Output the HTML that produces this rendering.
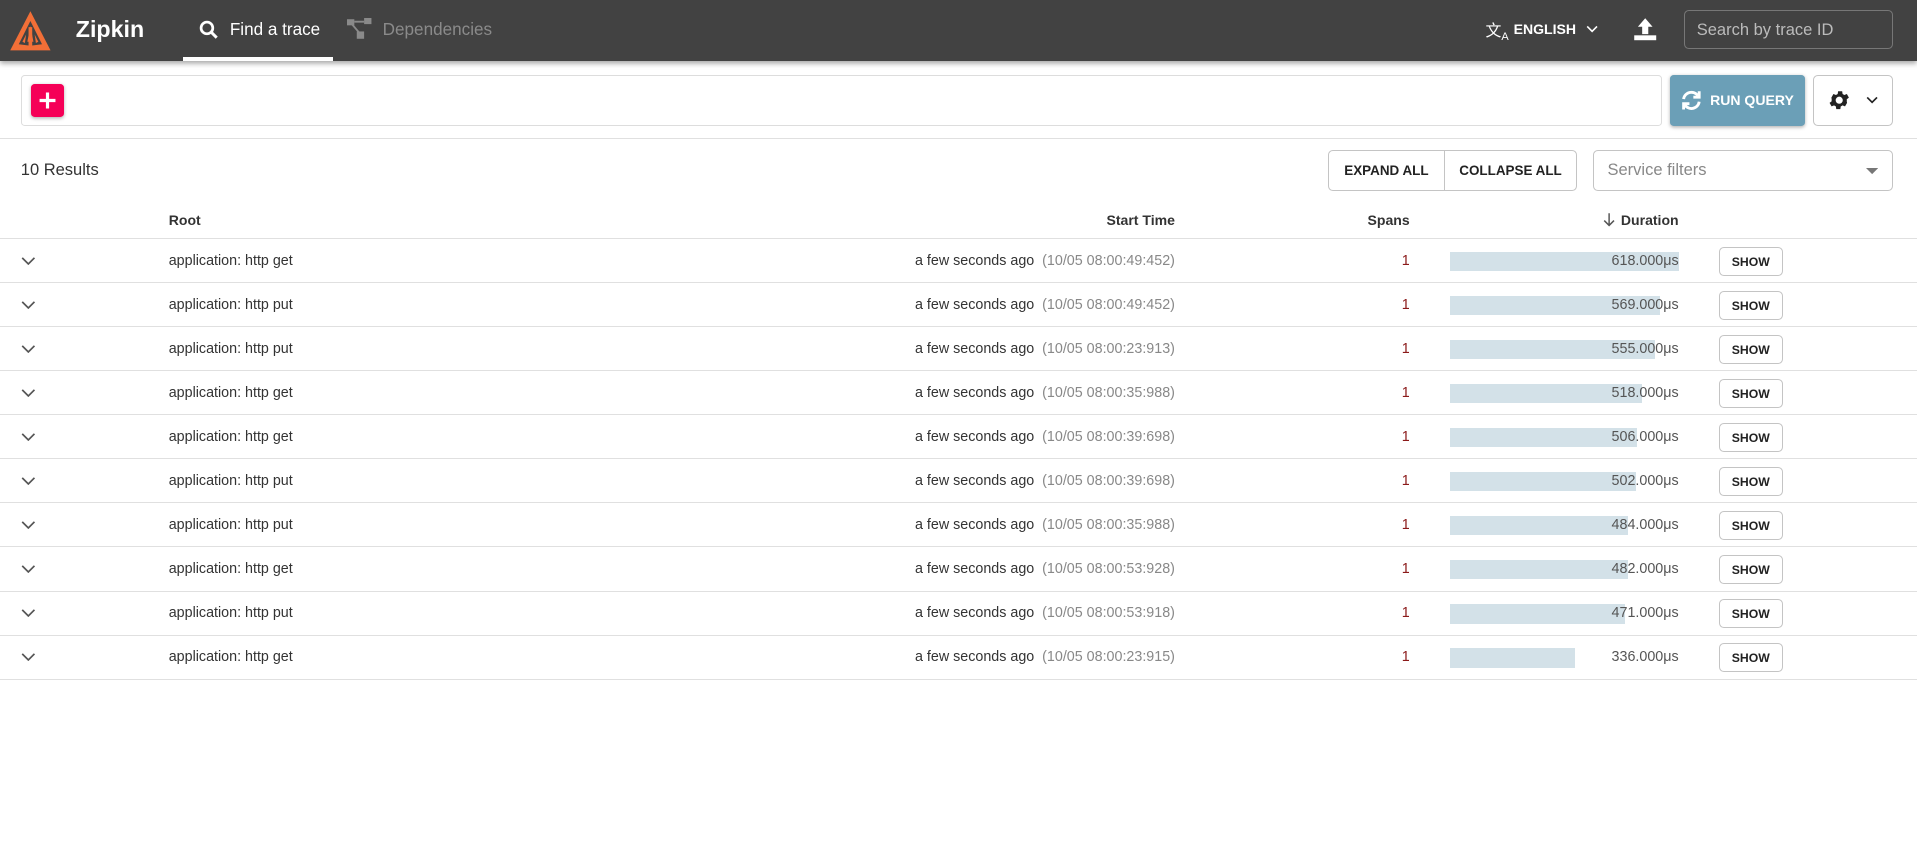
<!DOCTYPE html>
<html><head><meta charset="utf-8"><style>
html{zoom:1.2226}
body{margin:0;width:1568px;height:705px;overflow:hidden;background:#fff;font-family:"Liberation Sans",sans-serif;color:#333;position:relative}
.abs{position:absolute}
.hdr{left:0;top:0;width:1568px;height:50px;background:#424242;box-shadow:0 2px 4px rgba(0,0,0,.35)}
.btn{border:1px solid #c4c4c4;border-radius:4px;background:#fff;box-sizing:border-box;font-weight:bold;font-size:11px;color:#222;display:flex;align-items:center;justify-content:center}
.row{left:0;width:1568px;height:35px;border-bottom:1px solid #e0e0e0;font-size:11.7px}
.row div{position:absolute;top:0;line-height:35px}
</style></head><body>
<div class="abs hdr">
 <svg class="abs" style="left:7px;top:8px" width="35" height="34" viewBox="0 0 35 34"><path d="M17.5 1 L34 33 L1 33 Z" fill="#f26f37"/><path d="M17.5 9 L27 28 L19 29 L19 14 L16 14 L16 29 L8 28 Z" fill="#424242"/><path d="M17.5 13 L20 26 L15 26 Z" fill="#f26f37"/><path d="M11 26 L14 20 L13 27 Z M24 26 L21 20 L22 27Z" fill="#f26f37"/></svg>
 <div class="abs" style="left:62px;top:13px;color:#fff;font-weight:bold;font-size:19px">Zipkin</div>
 <svg class="abs" style="left:163px;top:16px" width="16" height="17" viewBox="0 0 16 17"><circle cx="6.5" cy="6.5" r="4.8" fill="none" stroke="#fff" stroke-width="2.2"/><path d="M10 10 L14.5 14.5" stroke="#fff" stroke-width="2.4"/></svg>
 <div class="abs" style="left:188px;top:16px;color:#fff;font-size:14px">Find a trace</div>
 <div class="abs" style="left:150px;top:47px;width:122px;height:3px;background:#fff"></div>
 <svg class="abs" style="left:284px;top:15px" width="20" height="18" viewBox="0 0 20 18"><rect x="0" y="1" width="6" height="5" fill="#8a8a8a"/><rect x="14" y="0" width="6" height="5" fill="#8a8a8a"/><rect x="8" y="11" width="6" height="6" fill="#8a8a8a"/><path d="M6 3 H14 M4 5 L10 12" stroke="#8a8a8a" stroke-width="1.5"/></svg>
 <div class="abs" style="left:313px;top:16px;color:#8a8a8a;font-size:14px">Dependencies</div>
 <div class="abs" style="left:1215px;top:15px;color:#fff;font-size:13px">文<sub style="font-size:9px">A</sub></div>
 <div class="abs" style="left:1238px;top:17px;color:#fff;font-size:11.5px;font-weight:bold">ENGLISH</div>
 <svg class="abs" style="left:1297px;top:20px" width="10" height="8"><path d="M1 2 L5 6 L9 2" stroke="#fff" fill="none" stroke-width="1.3"/></svg>
 <svg class="abs" style="left:1336px;top:14px" width="20" height="20" viewBox="0 0 20 20"><path d="M10 1 L16 8 H12.5 V14 H7.5 V8 H4 Z" fill="#fff"/><rect x="1" y="15" width="18" height="4" fill="#fff"/></svg>
 <div class="abs" style="left:1377px;top:8px;width:171px;height:32px;box-sizing:border-box;border:1px solid #777;border-radius:4px;color:#bbb;font-size:13.5px;padding:8px 0 0 10px">Search by trace ID</div>
</div>
<div class="abs" style="left:17px;top:61px;width:1342px;height:42px;box-sizing:border-box;border:1px solid #ddd;border-radius:3px"></div>
<div class="abs" style="left:25px;top:69px;width:27px;height:27px;background:#f50057;border-radius:3px;box-shadow:0 1px 3px rgba(0,0,0,.3)"><svg width="27" height="27"><path d="M13.5 7 V20 M7 13.5 H20" stroke="#fff" stroke-width="2.6"/></svg></div>
<div class="abs" style="left:1366px;top:61px;width:110px;height:42px;background:#6b9fb7;border-radius:3px;box-shadow:0 1px 3px rgba(0,0,0,.3);color:#fff;font-weight:bold;font-size:11.5px;display:flex;align-items:center;justify-content:center;gap:7px"><svg width="17" height="17" viewBox="0 0 16 16" fill="none" stroke="#fff" stroke-width="2.2"><path d="M2 7 A6 6 0 0 1 13 4.5"/><path d="M14 9 A6 6 0 0 1 3 11.5"/><path d="M14 1 V5.5 H9.5" /><path d="M2 15 V10.5 H6.5"/></svg>RUN QUERY</div>
<div class="abs btn" style="left:1483px;top:61px;width:65px;height:42px;gap:12px"><svg width="20" height="20" viewBox="0 0 24 24"><path fill="#222" d="M19.4 13a7.5 7.5 0 0 0 0-2l2.1-1.6-2-3.5-2.5 1a7 7 0 0 0-1.7-1l-.4-2.7h-4l-.4 2.7a7 7 0 0 0-1.7 1l-2.5-1-2 3.5L4.6 11a7.5 7.5 0 0 0 0 2l-2.1 1.6 2 3.5 2.5-1a7 7 0 0 0 1.7 1l.4 2.7h4l.4-2.7a7 7 0 0 0 1.7-1l2.5 1 2-3.5zM12 15.5a3.5 3.5 0 1 1 0-7 3.5 3.5 0 0 1 0 7z"/></svg><svg width="10" height="8"><path d="M1 2 L5 6 L9 2" stroke="#222" fill="none" stroke-width="1.4"/></svg></div>
<div class="abs" style="left:0;top:113px;width:1568px;height:1px;background:#e0e0e0"></div>
<div class="abs" style="left:17px;top:132px;font-size:13.5px;color:#333">10 Results</div>
<div class="abs btn" style="left:1086px;top:123px;width:96px;height:33px;border-radius:4px 0 0 4px">EXPAND ALL</div>
<div class="abs btn" style="left:1181px;top:123px;width:109px;height:33px;border-radius:0 4px 4px 0">COLLAPSE ALL</div>
<div class="abs" style="left:1303px;top:123px;width:245px;height:33px;box-sizing:border-box;border:1px solid #c4c4c4;border-radius:4px;color:#888;font-size:13.5px;padding:8px 0 0 11px">Service filters<svg class="abs" style="right:11px;top:14px" width="10" height="5"><path d="M0 0 H10 L5 5Z" fill="#777"/></svg></div>
<div class="abs" style="left:0;top:164px;width:1568px;height:31px;border-bottom:1px solid #e0e0e0;font-size:11.5px;font-weight:bold;color:#333">
 <div class="abs" style="left:138px;top:9px">Root</div>
 <div class="abs" style="right:607px;top:9px">Start Time</div>
 <div class="abs" style="right:415px;top:9px">Spans</div>
 <div class="abs" style="right:195px;top:9px">Duration</div>
 <svg class="abs" style="left:1311px;top:9px" width="10" height="13"><path d="M5 1 V11 M1 7 L5 11 L9 7" stroke="#555" fill="none" stroke-width="1.2"/></svg>
</div>
<div id="rows"></div>
<script>
var d=[["get","49:452",618],["put","49:452",569],["put","23:913",555],["get","35:988",518],["get","39:698",506],["put","39:698",502],["put","35:988",484],["get","53:928",482],["put","53:918",471],["get","23:915",336]];
var h="";d.forEach(function(r,i){var t=196+i*36;var w=Math.round(r[2]/618*187);
h+='<div class="abs row" style="top:'+t+'px"><svg style="position:absolute;left:17px;top:13px" width="12" height="8"><path d="M1 1.5 L6 6.5 L11 1.5" stroke="#555" fill="none" stroke-width="1.4"/></svg>'+
'<div style="left:138px">application: http '+r[0]+'</div>'+
'<div style="right:607px">a few seconds ago&nbsp; <span style="color:#888">(10/05 08:00:'+r[1]+')</span></div>'+
'<div style="right:415px;color:#8b1a1a">1</div>'+
'<span style="position:absolute;left:1186px;top:10px;width:'+w+'px;height:16px;background:#d3e1e8"></span>'+
'<div style="right:195px;color:#555">'+r[2]+'.000μs</div>'+
'<span class="btn" style="position:absolute;left:1406px;top:6px;width:52px;height:24px;font-size:10px">SHOW</span></div>';});
document.getElementById("rows").innerHTML=h;
</script>
</body></html>
